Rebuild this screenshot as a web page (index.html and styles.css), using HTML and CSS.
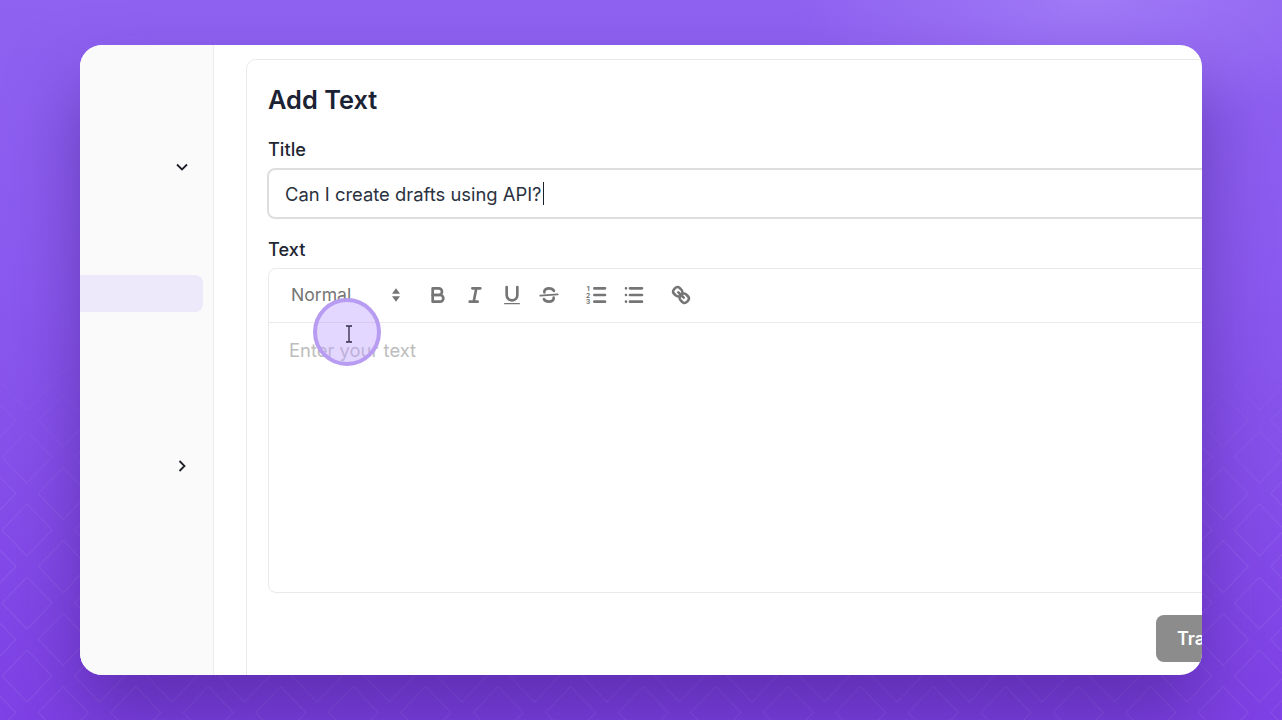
FILE: index.html
```html
<!DOCTYPE html>
<html lang="en">
  <head>
    <meta charset="UTF-8" />
    <title>Add Text</title>
    <link rel="stylesheet" href="styles.css">
  </head>
  <body>
    <div class="stage">
      <svg class="bg-pattern" width="1282" height="720" xmlns="http://www.w3.org/2000/svg">
        <defs>
          <pattern id="diamonds" width="72.5" height="73" patternUnits="userSpaceOnUse" patternTransform="translate(1 -7)">
            <path d="M1 26 26 0 51 26 26 52Z" />
            <path d="M37.25 62.5 62.25 36.5 87.25 62.5 62.25 88.5Z" />
            <path d="M-35.25 62.5 -10.25 36.5 14.75 62.5 -10.25 88.5Z" />
            <path d="M37.25 -10.5 62.25 -36.5 87.25 -10.5 62.25 15.5Z" />
            <path d="M-35.25 -10.5 -10.25 -36.5 14.75 -10.5 -10.25 15.5Z" />
          </pattern>
        </defs>
        <rect width="1282" height="720" fill="url(#diamonds)" />
      </svg>

      <div class="window">
        <aside class="sidebar">
          <div class="side-row side-row-first">
            <svg class="chevron" width="14" height="14" viewBox="0 0 14 14">
              <path d="M2 4.5 7 9.5 12 4.5" />
            </svg>
          </div>
          <div class="side-row side-row-active"></div>
          <div class="side-row side-row-last">
            <svg class="chevron" width="14" height="14" viewBox="0 0 14 14">
              <path d="M4.5 2 9.5 7 4.5 12" />
            </svg>
          </div>
        </aside>

        <main class="main">
          <section class="panel">
            <h1 class="panel-title">Add Text</h1>

            <label class="field-label">Title</label>
            <div class="title-input">Can I create drafts using API?<span class="caret"></span></div>

            <label class="field-label field-label-text">Text</label>
            <div class="editor">
              <div class="toolbar">
                <div class="format-select">
                  <span>Normal</span>
                  <svg class="tool-icon" width="24" height="24" viewBox="0 0 18 18">
                    <polygon class="fill" points="6 8 9 4 12 8" />
                    <polygon class="fill" points="6 10 9 14 12 10" />
                  </svg>
                </div>

                <div class="tool-group">
                  <button class="tool-btn">
                    <svg class="tool-icon" width="24" height="24" viewBox="0 0 18 18">
                      <path d="M5 4H9.5A2.5 2.5 0 0 1 12 6.5 2.5 2.5 0 0 1 9.5 9H5Z" />
                      <path d="M5 9H10.5A2.5 2.5 0 0 1 13 11.5 2.5 2.5 0 0 1 10.5 14H5Z" />
                    </svg>
                  </button>
                  <button class="tool-btn">
                    <svg class="tool-icon" width="24" height="24" viewBox="0 0 18 18">
                      <path d="M7 4H13M5 14H11M8 14 10 4" />
                    </svg>
                  </button>
                  <button class="tool-btn">
                    <svg class="tool-icon" width="24" height="24" viewBox="0 0 18 18">
                      <path d="M5 3V9A4 4 0 0 0 9 13 4 4 0 0 0 13 9V3" />
                      <rect class="fill" x="3" y="15" width="12" height="1" rx="0.5" />
                    </svg>
                  </button>
                  <button class="tool-btn">
                    <svg class="tool-icon" width="24" height="24" viewBox="0 0 18 18">
                      <path class="thin" d="M15.5 8.5 2.5 9.5" />
                      <path d="M5.5 7C5.2 5 7 4 9 4 10.6 4 12 4.6 12.7 5.8" />
                      <path d="M12.5 11C12.8 13 11 14 9 14 7.2 14 5.8 13.3 5.2 12.1" />
                    </svg>
                  </button>
                </div>

                <div class="tool-group">
                  <button class="tool-btn">
                    <svg class="tool-icon" width="24" height="24" viewBox="0 0 18 18">
                      <path d="M7 4H15M7 9H15M7 14H15" />
                      <text class="list-num" x="2.4" y="6">1</text>
                      <text class="list-num" x="2.4" y="11">2</text>
                      <text class="list-num" x="2.4" y="16">3</text>
                    </svg>
                  </button>
                  <button class="tool-btn">
                    <svg class="tool-icon" width="24" height="24" viewBox="0 0 18 18">
                      <path d="M6 4H15M6 9H15M6 14H15M3 4H3M3 9H3M3 14H3" />
                    </svg>
                  </button>
                </div>

                <div class="tool-group">
                  <button class="tool-btn">
                    <svg class="tool-icon" width="24" height="24" viewBox="0 0 18 18">
                      <path d="M7 7 11 11" />
                      <path d="M8.9 4.6A3.5 3.5 0 0 1 9.3 9.3 3.5 3.5 0 0 1 4.6 8.9C3.2 7.5 2 6.4 4.2 4.2S7.5 3.2 8.9 4.6Z" />
                      <path d="M13.4 9.1A3.5 3.5 0 0 0 8.7 8.7 3.5 3.5 0 0 0 9.1 13.4C10.5 14.8 11.6 16 13.8 13.8S14.8 10.5 13.4 9.1Z" />
                    </svg>
                  </button>
                </div>
              </div>
              <div class="editor-body">Enter your text</div>
            </div>

            <div class="panel-footer">
              <button class="train-btn">Train</button>
            </div>
          </section>
        </main>

        <div class="cursor-ring">
          <svg width="10" height="18" viewBox="0 0 10 18">
            <path d="M2 1H4.2Q5 1 5 2V16Q5 17 4.2 17H2M8 1H5.8Q5 1 5 2V16Q5 17 5.8 17H8" />
          </svg>
        </div>
      </div>
    </div>
  </body>
</html>
```

FILE: styles.css
```css
* {
  box-sizing: border-box;
  margin: 0;
  padding: 0;
  font-family: "Inter", sans-serif;
}

body {
  width: 1282px;
  height: 720px;
  overflow: hidden;
}

.stage {
  position: relative;
  width: 1282px;
  height: 720px;
  padding: 45px 80px;
  background:
    radial-gradient(ellipse 300px 130px at 1090px 0, rgba(176, 146, 252, 0.5), rgba(176, 146, 252, 0)),
    linear-gradient(180deg, #8f62f1 0%, #8b59ef 40%, #7e41e5 100%);
}

.bg-pattern {
  position: absolute;
  top: 0;
  left: 0;
  -webkit-mask-image: linear-gradient(180deg, transparent 40%, black 75%);
  mask-image: linear-gradient(180deg, transparent 40%, black 75%);
}

.bg-pattern path {
  fill: none;
  stroke: rgba(255, 255, 255, 0.09);
  stroke-width: 1;
}

.window {
  position: relative;
  display: flex;
  width: 1122px;
  height: 630px;
  background: #fff;
  border-radius: 22px;
  overflow: hidden;
  box-shadow: 0 40px 70px 0 rgba(64, 28, 130, 0.5);
}

.sidebar {
  flex: 0 0 134px;
  padding: 103px 10px 0 0;
  background: #fafafa;
  border-right: 1px solid #ececec;
}

.side-row {
  display: flex;
  align-items: center;
  justify-content: flex-end;
  height: 37px;
  padding-right: 14px;
}

.side-row-active {
  margin-top: 90px;
  background: #ede8fa;
  border-radius: 0 8px 8px 0;
}

.side-row-last {
  margin-top: 135px;
}

.chevron path {
  fill: none;
  stroke: #1f2128;
  stroke-width: 1.8;
}

.main {
  flex: 1;
  min-width: 0;
  padding: 14px 0 0 32px;
}

.panel {
  width: 1020px;
  height: 640px;
  padding: 24px 21px 0;
  border: 1px solid #e9e9e9;
  border-radius: 10px;
}

.panel-title {
  font-size: 25.4px;
  line-height: 32px;
  font-weight: 600;
  color: #1a2233;
}

.field-label {
  display: block;
  margin-top: 21px;
  font-size: 18.2px;
  line-height: 24px;
  font-weight: 500;
  color: #1f2733;
}

.field-label-text {
  margin-top: 18px;
}

.title-input {
  display: flex;
  align-items: center;
  height: 51px;
  margin: 7px 0 0 -1px;
  padding-left: 16px;
  border: 2px solid #dedede;
  border-radius: 8px;
  font-size: 18.4px;
  color: #2a3240;
}

.caret {
  width: 1px;
  height: 23px;
  margin-left: 1px;
  background: #1a202c;
}

.editor {
  height: 325px;
  margin-top: 7px;
  border: 1px solid #e9e9e9;
  border-radius: 8px;
}

.toolbar {
  display: flex;
  align-items: center;
  height: 54px;
  padding: 0 0 2px 22px;
  border-bottom: 1px solid #e9e9e9;
}

.format-select {
  display: flex;
  align-items: center;
  justify-content: space-between;
  width: 117px;
  font-size: 17.6px;
  color: #757575;
}

.tool-group {
  display: flex;
  margin-left: 11px;
}

.tool-group:last-child {
  margin-left: 10px;
}

.tool-btn {
  display: flex;
  align-items: center;
  justify-content: center;
  width: 37px;
  height: 30px;
  background: none;
  border: none;
  cursor: pointer;
}

.tool-icon path {
  fill: none;
  stroke: #757575;
  stroke-width: 2;
  stroke-linecap: round;
  stroke-linejoin: round;
}

.tool-icon .thin {
  stroke-width: 1.4;
}

.tool-icon .fill {
  fill: #757575;
}

.list-num {
  font-size: 5px;
  font-weight: 700;
  fill: #757575;
  text-anchor: middle;
}

.editor-body {
  padding: 15px 20px;
  font-size: 18.4px;
  line-height: 24px;
  color: #bdbdbd;
}

.panel-footer {
  display: flex;
  justify-content: flex-end;
  margin-top: 22px;
}

.train-btn {
  width: 88px;
  height: 47px;
  padding-left: 21px;
  text-align: left;
  background: #8c8c8c;
  border: none;
  border-radius: 8px;
  font-size: 18px;
  font-weight: 600;
  color: #fff;
}

.cursor-ring {
  position: absolute;
  top: 253px;
  left: 233px;
  display: flex;
  align-items: center;
  justify-content: center;
  width: 68px;
  height: 68px;
  padding: 4px 0 0 4px;
  background: rgba(190, 160, 255, 0.42);
  border: 4px solid #b79cf2;
  border-radius: 50%;
}

.cursor-ring path {
  fill: none;
  stroke: #2e2945;
  stroke-width: 1.3;
}
```
